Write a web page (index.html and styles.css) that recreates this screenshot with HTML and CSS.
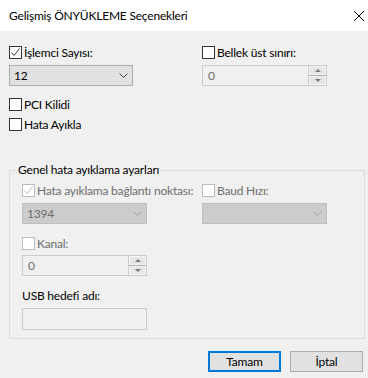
FILE: index.html
```html
<!DOCTYPE html>
<html lang="tr">
<head>
    <meta charset="UTF-8">
    <title>Gelişmiş ÖNYÜKLEME Seçenekleri</title>
    <link rel="stylesheet" href="styles.css">
</head>
<body>
    <div class="window">
        <div class="titlebar">
            <span class="title">Gelişmiş ÖNYÜKLEME Seçenekleri</span>
            <svg class="close" width="10" height="10" viewBox="0 0 10 10">
                <path d="M0 0 L10 10 M10 0 L0 10" stroke="#000" stroke-width="1"/>
            </svg>
        </div>

        <div class="content">
            <div class="top-grid">
                <div class="col">
                    <label class="check">
                        <span class="box checked">
                            <svg width="11" height="11" viewBox="0 0 11 11"><path d="M1.5 5.5 L4 8.5 L9.5 1.5" fill="none" stroke="#333" stroke-width="1"/></svg>
                        </span>
                        İşlemci Sayısı:
                    </label>
                    <div class="select">
                        <span>12</span>
                        <svg class="arrow" width="9" height="5" viewBox="0 0 9 5"><path d="M0.5 0.5 L4.5 4.5 L8.5 0.5" fill="none" stroke="#444" stroke-width="1"/></svg>
                    </div>
                </div>
                <div class="col">
                    <label class="check">
                        <span class="box"></span>
                        Bellek üst sınırı:
                    </label>
                    <div class="spinner">
                        <span class="value">0</span>
                        <div class="spin">
                            <span class="spin-btn"><i class="up"></i></span>
                            <span class="spin-btn"><i class="down"></i></span>
                        </div>
                    </div>
                </div>
            </div>

            <label class="check pci">
                <span class="box"></span>
                PCI Kilidi
            </label>
            <label class="check debug">
                <span class="box"></span>
                Hata Ayıkla
            </label>

            <fieldset class="group">
                <legend>Genel hata ayıklama ayarları</legend>
                <div class="inner-grid">
                    <div class="col">
                        <label class="check disabled">
                            <span class="box checked">
                                <svg width="11" height="11" viewBox="0 0 11 11"><path d="M1.5 5.5 L4 8.5 L9.5 1.5" fill="none" stroke="#bcbcbc" stroke-width="1"/></svg>
                            </span>
                            Hata ayıklama bağlantı noktası:
                        </label>
                        <div class="select disabled">
                            <span>1394</span>
                            <svg class="arrow" width="9" height="5" viewBox="0 0 9 5"><path d="M0.5 0.5 L4.5 4.5 L8.5 0.5" fill="none" stroke="#a0a0a0" stroke-width="1"/></svg>
                        </div>
                    </div>
                    <div class="col">
                        <label class="check disabled">
                            <span class="box"></span>
                            Baud Hızı:
                        </label>
                        <div class="select disabled">
                            <span></span>
                            <svg class="arrow" width="9" height="5" viewBox="0 0 9 5"><path d="M0.5 0.5 L4.5 4.5 L8.5 0.5" fill="none" stroke="#a0a0a0" stroke-width="1"/></svg>
                        </div>
                    </div>
                </div>

                <label class="check disabled kanal">
                    <span class="box"></span>
                    Kanal:
                </label>
                <div class="spinner small">
                    <span class="value">0</span>
                    <div class="spin">
                        <span class="spin-btn"><i class="up"></i></span>
                        <span class="spin-btn"><i class="down"></i></span>
                    </div>
                </div>

                <div class="field-label">USB hedefi adı:</div>
                <div class="textbox"></div>
            </fieldset>

            <div class="buttons">
                <button class="btn default">Tamam</button>
                <button class="btn">İptal</button>
            </div>
        </div>
    </div>
</body>
</html>
```
FILE: styles.css
```css
* {
    box-sizing: border-box;
}

body {
    margin: 0;
    background-color: #f0f0f0;
    font-family: Lato, "Noto Sans", sans-serif;
    font-size: 12px;
    letter-spacing: -0.2px;
    color: #000;
}

.window {
    width: 368px;
    height: 378px;
    background-color: #f0f0f0;
}

.titlebar {
    height: 31px;
    background-color: #fff;
    display: flex;
    align-items: center;
    justify-content: space-between;
    padding: 0 4px 0 9px;
}

.content {
    padding: 15px 4px 0 9px;
}

.top-grid,
.inner-grid {
    display: grid;
    grid-template-columns: 124px 125px;
    column-gap: 69px;
}

.inner-grid {
    grid-template-columns: 125px 125px;
    column-gap: 55px;
}

.check {
    display: flex;
    align-items: center;
    height: 13px;
    line-height: 13px;
    white-space: nowrap;
}

.box {
    width: 13px;
    height: 13px;
    border: 1px solid #333;
    background-color: #fff;
    margin-right: 2px;
    flex-shrink: 0;
    display: flex;
    align-items: center;
    justify-content: center;
}

.check.disabled {
    color: #6d6d6d;
}

.check.disabled .box {
    border-color: #bcbcbc;
}

.select {
    margin-top: 6px;
    height: 21px;
    border: 1px solid #adadad;
    background-color: #e1e1e1;
    display: flex;
    align-items: center;
    justify-content: space-between;
    padding: 0 4px 0 4px;
}

.select.disabled {
    background-color: #cccccc;
    border-color: #bfbfbf;
    color: #6d6d6d;
}

.spinner {
    margin-top: 6px;
    height: 21px;
    border: 1px solid #cccccc;
    background-color: #f0f0f0;
    display: flex;
    justify-content: space-between;
}

.spinner .value {
    color: #6d6d6d;
    padding-left: 5px;
    line-height: 19px;
}

.spin {
    width: 18px;
    display: flex;
    flex-direction: column;
    gap: 1px;
    border-left: 1px solid #cccccc;
    background-color: #adadad;
}

.spin-btn {
    flex: 1;
    background-color: #e6e6e6;
    border: 1px solid #f4f4f4;
    display: flex;
    align-items: center;
    justify-content: center;
}

.spin-btn i {
    width: 0;
    height: 0;
    border-left: 3px solid transparent;
    border-right: 3px solid transparent;
}

.spin-btn .up {
    border-bottom: 3px solid #7a7a7a;
}

.spin-btn .down {
    border-top: 3px solid #7a7a7a;
}

.pci {
    margin-top: 12px;
}

.debug {
    margin-top: 7px;
}

.group {
    margin: 31px 0 0 0;
    width: 356px;
    border: 1px solid #dcdcdc;
    padding: 6px 12px 8px 12px;
}

.group legend {
    padding: 0 2px;
    margin-left: -6px;
    line-height: 16px;
}

.kanal {
    margin-top: 13px;
}

.spinner.small {
    width: 125px;
    margin-top: 5px;
}

.field-label {
    margin-top: 12px;
    line-height: 16px;
}

.textbox {
    margin-top: 4px;
    width: 125px;
    height: 22px;
    border: 1px solid #cccccc;
    background-color: #f0f0f0;
}

.buttons {
    display: flex;
    justify-content: flex-end;
    gap: 9px;
    margin-top: 12px;
    padding-right: 1px;
}

.btn {
    width: 73px;
    height: 21px;
    font-family: inherit;
    font-size: 12px;
    letter-spacing: -0.2px;
    background-color: #e1e1e1;
    border: 1px solid #adadad;
    padding: 0;
    color: #000;
}

.btn.default {
    border: 2px solid #0078d7;
}
```
